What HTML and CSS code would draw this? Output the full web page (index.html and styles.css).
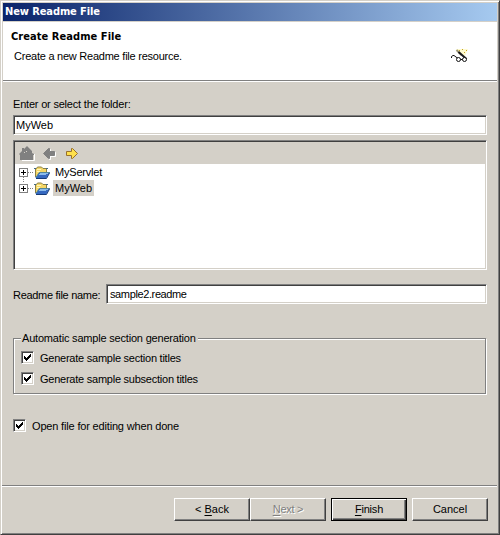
FILE: index.html
```
<!DOCTYPE html>
<html lang="en">
<head>
<meta charset="utf-8">
<title>New Readme File</title>
<link rel="stylesheet" href="styles.css">
</head>
<body>
<svg class="defs" width="0" height="0">
  <symbol id="folder" viewBox="0 0 16 13">
    <path d="M1.500 11V2.500h1l1-1.500h4l1.500 1.500h3.500V6" fill="#f5d766" stroke="#8a7f45"/>
    <path d="M0 2.500h2M12 2.500h2" stroke="#446a80"/>
    <path d="M3 3.500h4M3 5.500h3" stroke="#fff6b8"/>
    <path d="M1.500 11.500L5 6.500h10.500l-3 5.500H2z" fill="#3568c0"/>
    <path d="M2 11.500L5.500 6.500H16" fill="none" stroke="#52869a"/>
    <path d="M6 7.500h8M5 8.500h7" stroke="#8bbceb"/>
    <path d="M2 12.500h10.500l3-5.500" fill="none" stroke="#153b78"/>
  </symbol>
  <symbol id="arrow" viewBox="0 0 14 13">
    <path d="M1.500 4.500h5v-3h1l5 5-5 5h-1v-3h-5z"/>
  </symbol>
  <symbol id="check" viewBox="0 0 7 7">
    <path d="M0 2v3l2 2 5-5V0L2 4z" shape-rendering="crispEdges"/>
  </symbol>
</svg>
<div class="window">
  <div class="titlebar"><span class="t-title">New Readme File</span></div>
  <header class="banner">
    <div>
      <h1><span class="t-heading">Create Readme File</span></h1>
      <p><span class="t-sub">Create a new Readme file resource.</span></p>
    </div>
    <svg class="wizard" width="20" height="17" viewBox="0 0 20 17">
      <path d="M6 1h12l-3 7-5-2z" fill="#fffbd0"/>
      <path d="M12 1h1v1h-1zM16 2h1v1h-1zM14 4h1v1h-1zM9 2h1v1H9z" fill="#c7a52b"/>
      <path d="M6.500 2l5 5" stroke="#9a9470" stroke-width="2"/>
      <path d="M8.500 4l8 7" stroke="#18181c" stroke-width="2"/>
      <path d="M1.500 10V8.500L3 7.500h1l4 3" fill="none" stroke="#111"/>
      <circle cx="8.500" cy="11.500" r="2" fill="#fff" stroke="#111"/>
      <circle cx="14.500" cy="11.500" r="2" fill="#fff" stroke="#111"/>
      <path d="M10.500 11.500h2" stroke="#111"/>
    </svg>
  </header>
  <main class="content">
    <div class="label"><span class="t-enter">Enter or select the folder:</span></div>
    <div class="field folder-field"><span class="t-myweb">MyWeb</span></div>
    <div class="field tree">
      <div class="toolbar">
        <svg width="16" height="15" viewBox="0 0 16 15"><path d="M3 14.500h12.500V8" fill="none" stroke="#fff"/><path d="M0 8l3-3V2h2v1l3-3 5 5v2l2 1v1h-1v5H1V9z" fill="#808080"/><path d="M5 6h1v1H5zM7 5h1v1H7z" fill="#d4d0c8"/></svg>
        <svg class="back" width="14" height="13"><use href="#arrow" width="14" height="13" fill="#fff" stroke="#fff" transform="translate(15 1) scale(-1 1)"/><use href="#arrow" width="14" height="13" fill="#808080" stroke="#808080" transform="translate(14 0) scale(-1 1)"/></svg>
        <svg class="forward" width="14" height="13"><use href="#arrow" width="14" height="13" fill="#ffe04b" stroke="#98702d"/></svg>
      </div>
      <div class="node first"><span class="expander"></span><span class="dots"></span><svg width="16" height="13"><use href="#folder"/></svg><span class="name"><span class="t-servlet">MyServlet</span></span></div>
      <div class="node"><span class="expander"></span><span class="dots"></span><svg width="16" height="13"><use href="#folder"/></svg><span class="name selected"><span class="t-myweb">MyWeb</span></span></div>
    </div>
    <div class="file-row"><span class="t-filename">Readme file name:</span><div class="field"><span class="t-sample">sample2.readme</span></div></div>
    <fieldset>
      <legend><span class="t-legend">Automatic sample section generation</span></legend>
      <div class="option"><span class="box"><svg width="7" height="7"><use href="#check"/></svg></span><span class="t-gen">Generate sample section titles</span></div>
      <div class="option"><span class="box"><svg width="7" height="7"><use href="#check"/></svg></span><span class="t-gen">Generate sample subsection titles</span></div>
    </fieldset>
    <div class="option open"><span class="box"><svg width="7" height="7"><use href="#check"/></svg></span><span class="t-open">Open file for editing when done</span></div>
  </main>
  <footer>
    <div class="button"><span>&lt; <u>B</u>ack</span></div>
    <div class="button disabled"><span class="t-next"><u>N</u>ext &gt;</span></div>
    <div class="button default"><span class="t-finish"><u>F</u>inish</span></div>
    <div class="button cancel"><span>Cancel</span></div>
  </footer>
</div>
</body>
</html>
```
FILE: styles.css
```
* { box-sizing: border-box; }
body { margin: 0; font: 11px/14px "Liberation Sans", Arial, sans-serif; color: #000; }
span { white-space: nowrap; }
svg { display: block; flex: none; }
.defs { position: absolute; }
.window {
  width: 500px; height: 535px; display: flex; flex-direction: column;
  padding: 1px; background: #d4d0c8;
  border: 1px solid; border-color: #d4d0c8 #404040 #404040 #d4d0c8;
  box-shadow: inset 1px 1px #fff, inset -1px -1px #808080;
}
.titlebar {
  height: 18px; margin: 1px 1px 0; padding-left: 2px; flex: none;
  background: linear-gradient(90deg, #0a246a, #a6caf0);
  color: #fff; font: bold 11px/18px "DejaVu Sans Condensed", "DejaVu Sans", sans-serif;
}
.banner {
  display: flex; justify-content: space-between; flex: none;
  height: 60px; margin: 1px 1px 0; padding: 8px 27px 0 8px;
  background: #fff; border-bottom: 1px solid #fff; box-shadow: inset 0 -1px #808080;
}
h1 { margin: 0; font: bold 11px/14px "DejaVu Sans Condensed", "DejaVu Sans", sans-serif; }
p { margin: 5px 0 0 3px; }
.wizard { margin-top: 18px; }
.content { padding: 15px 11px 0; flex: 1; }
.label { height: 18px; }
.field {
  background: #fff; border: 1px solid; border-color: #808080 #fff #fff #808080;
  box-shadow: inset 1px 1px #404040, inset -1px -1px #d4d0c8;
}
.folder-field { height: 20px; padding: 2px 2px; }
.tree { height: 130px; margin-top: 5px; padding: 1px; }
.toolbar { display: flex; align-items: center; height: 22px; padding-left: 4px; background: #d4d0c8; }
.back { margin-left: 7px; }
.forward { margin-left: 9px; }
.node { display: flex; align-items: center; height: 16px; padding-left: 4px; }
.expander {
  width: 9px; height: 9px; border: 1px solid #808080; flex: none;
  background: linear-gradient(#000, #000) center / 5px 1px no-repeat, linear-gradient(#000, #000) center / 1px 5px no-repeat;
}
.dots { width: 6px; height: 1px; background: repeating-linear-gradient(90deg, #808080 0 1px, transparent 1px 2px); }
.node.first { position: relative; }
.node.first::after { content: ""; position: absolute; left: 8px; top: 13px; width: 1px; height: 6px; background: repeating-linear-gradient(#808080 0 1px, transparent 1px 2px); }
.name { height: 16px; line-height: 16px; padding: 0 2px; margin-left: 3px; }
.selected { background: #d4d0c8; width: 41px; }
.file-row { display: flex; align-items: center; height: 20px; margin-top: 14px; }
.file-row > span { width: 93px; padding-top: 2px; }
.file-row .field { flex: 1; height: 20px; padding: 2px 3px; }
fieldset {
  height: 63px; margin: 27px 1px 0 0; padding: 6px 7px 0; min-width: 0;
  border: 1px solid #808080;
  box-shadow: inset 1px 1px #fff, 1px 1px #fff;
}
legend { height: 14px; padding: 0 2px 0 1px; background: #d4d0c8; }
.option { display: flex; align-items: center; height: 13px; }
.option + .option { margin-top: 8px; }
.box {
  display: flex; align-items: center; justify-content: center;
  width: 13px; height: 13px; margin-right: 6px; background: #fff;
  border: 1px solid; border-color: #808080 #fff #fff #808080;
  box-shadow: inset 1px 1px #404040, inset -1px -1px #d4d0c8;
}
.open { margin-top: 25px; }
footer {
  display: flex; flex: none; height: 48px; padding: 12px 10px 0 172px;
  margin: 0 1px 0 0; border-top: 1px solid #808080; box-shadow: inset 0 1px #fff;
}
footer .button {
  width: 76px; height: 23px; flex: none; text-align: center; line-height: 20px;
  border: 1px solid; border-color: #fff #404040 #404040 #fff;
  box-shadow: inset -1px -1px #808080;
}
footer .disabled { color: #808080; text-shadow: 1px 1px #fff; }
footer .default { margin-left: 5px; border-color: #000; box-shadow: inset 1px 1px #fff, inset -1px -1px #404040, inset -2px -2px #808080; }
footer .cancel { margin-left: 5px; }
u { text-decoration: underline; text-underline-offset: 2px; }

.t-title { letter-spacing: -.1px; }
.t-heading { letter-spacing: .06px; }
.t-sub, .t-gen { letter-spacing: -.24px; }
.t-enter, .t-servlet { letter-spacing: -.2px; }
.t-filename { letter-spacing: -.3px; }
.t-sample { letter-spacing: -.38px; }
.t-legend { letter-spacing: -.19px; }
.t-open { letter-spacing: -.17px; }
.t-next { letter-spacing: -.25px; }
.t-finish { letter-spacing: -.2px; }
```
